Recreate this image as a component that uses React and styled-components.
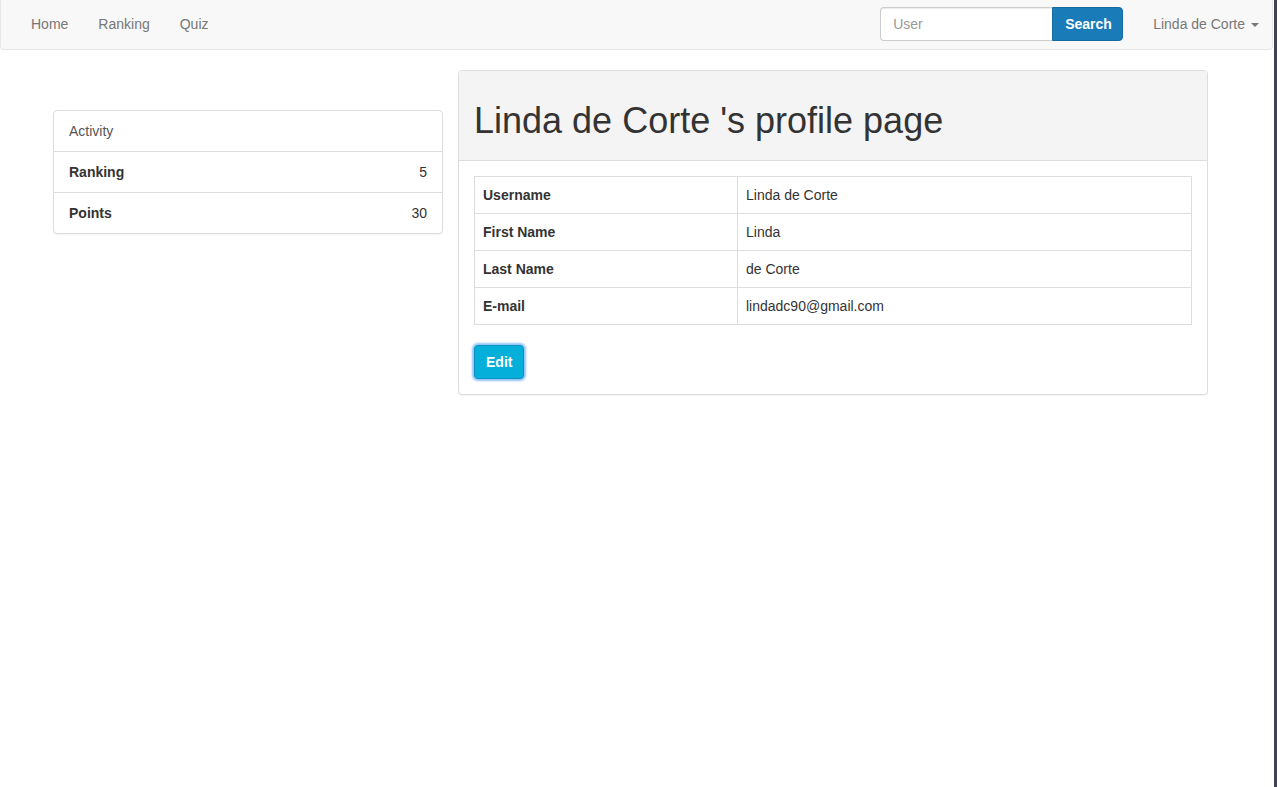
import React from "react";
import styled, { createGlobalStyle } from "styled-components";

const Global = createGlobalStyle`
  html, body { margin: 0; padding: 0; background: #fff; }
  body {
    font-family: "Liberation Sans", Arial, Helvetica, sans-serif;
    font-size: 14px;
    line-height: 20px;
    color: #333;
  }
  * { box-sizing: border-box; }
`;

const Page = styled.div`
  min-height: 100vh;
  border-right: 3px solid #3c4455;
  background: #fff;
`;

const Navbar = styled.nav`
  height: 50px;
  margin-right: 1px;
  background: #f8f8f8;
  border: 1px solid #e7e7e7;
  border-top: none;
  border-radius: 0 0 4px 4px;
  display: flex;
  align-items: flex-start;
  justify-content: space-between;
  padding: 0 0 0 15px;
`;

const NavList = styled.div`
  display: flex;
  align-items: flex-start;
  height: 100%;
`;

const NavLink = styled.a`
  display: flex;
  align-items: center;
  gap: 6px;
  padding: 14px ${(p) => (p.$end ? "13px" : "15px")} 15px 15px;
  line-height: 20px;
  color: #777;
  text-decoration: none;
  font-size: 14px;
`;

const SearchForm = styled.form`
  display: flex;
  align-items: stretch;
  height: 34px;
  margin: 7px 15px 0 0;
`;

const SearchInput = styled.input`
  width: 172px;
  height: 34px;
  padding: 6px 12px;
  font-family: inherit;
  font-size: 14px;
  color: #555;
  background: #fff;
  border: 1px solid #ccc;
  border-right: none;
  border-radius: 4px 0 0 4px;
  box-shadow: inset 0 1px 1px rgba(0, 0, 0, 0.075);
  outline: none;
  &::placeholder { color: #999; }
`;

const SearchButton = styled.button`
  width: 71px;
  height: 34px;
  padding: 6px 12px;
  font-family: inherit;
  font-size: 14px;
  font-weight: bold;
  color: #fff;
  background: #1a7bb9;
  border: 1px solid #166aa1;
  border-radius: 0 4px 4px 0;
`;

const Caret = styled.span`
  display: inline-block;
  width: 0;
  height: 0;
  border-top: 4px solid #777;
  border-left: 4px solid transparent;
  border-right: 4px solid transparent;
  margin-top: 1px;
`;

const Main = styled.main`
  display: flex;
  align-items: flex-start;
  padding: 20px 0 0 53px;
`;

const Panel = styled.section`
  background: #fff;
  border: 1px solid #ddd;
  border-radius: 4px;
  box-shadow: 0 1px 1px rgba(0, 0, 0, 0.05);
  overflow: hidden;
`;

const SidePanel = styled(Panel)`
  width: 390px;
  margin-top: 40px;
`;

const ProfilePanel = styled(Panel)`
  width: 750px;
  margin-left: 15px;
`;

const SideHeading = styled.div`
  padding: 10px 15px;
  color: #555;
  border-bottom: 1px solid #ddd;
`;

const StatRow = styled.div`
  display: flex;
  justify-content: space-between;
  padding: 10px 15px;
  border-top: ${(p) => (p.$first ? "none" : "1px solid #ddd")};
`;

const StatLabel = styled.span`
  font-weight: bold;
`;

const ProfileHeading = styled.div`
  background: #f4f4f4;
  border-bottom: 1px solid #ddd;
  padding: 10px 15px;
`;

const Title = styled.h1`
  margin: 20px 0 10px;
  font-size: 36px;
  font-weight: 500;
  line-height: 39px;
  color: #333;
`;

const PanelBody = styled.div`
  padding: 15px;
`;

const Table = styled.table`
  width: 100%;
  border-collapse: collapse;
  margin-bottom: 20px;
  border: 1px solid #ddd;
`;

const Cell = styled.td`
  padding: 8px;
  line-height: 20px;
  border: 1px solid #ddd;
  font-weight: ${(p) => (p.$head ? "bold" : "normal")};
  width: ${(p) => (p.$head ? "263px" : "auto")};
  color: #333;
`;

const EditButton = styled.button`
  height: 34px;
  padding: 6px 11px;
  font-family: inherit;
  font-size: 14px;
  font-weight: bold;
  color: #fff;
  background: #04afda;
  border: 1px solid #0a93c2;
  border-radius: 4px;
  box-shadow: 0 0 2px 2px rgba(110, 175, 245, 0.75);
`;

const profile = [
  ["Username", "Linda de Corte"],
  ["First Name", "Linda"],
  ["Last Name", "de Corte"],
  ["E-mail", "lindadc90@gmail.com"],
];

export default function App() {
  return (
    <Page>
      <Global />
      <Navbar>
        <NavList>
          <NavLink href="#">Home</NavLink>
          <NavLink href="#">Ranking</NavLink>
          <NavLink href="#">Quiz</NavLink>
        </NavList>
        <NavList>
          <SearchForm onSubmit={(e) => e.preventDefault()}>
            <SearchInput placeholder="User" />
            <SearchButton type="submit">Search</SearchButton>
          </SearchForm>
          <NavLink href="#" $end>
            Linda de Corte <Caret />
          </NavLink>
        </NavList>
      </Navbar>
      <Main>
        <SidePanel>
          <SideHeading>Activity</SideHeading>
          <StatRow $first>
            <StatLabel>Ranking</StatLabel>
            <span>5</span>
          </StatRow>
          <StatRow>
            <StatLabel>Points</StatLabel>
            <span>30</span>
          </StatRow>
        </SidePanel>
        <ProfilePanel>
          <ProfileHeading>
            <Title>Linda de Corte 's profile page</Title>
          </ProfileHeading>
          <PanelBody>
            <Table>
              <tbody>
                {profile.map(([k, v]) => (
                  <tr key={k}>
                    <Cell $head>{k}</Cell>
                    <Cell>{v}</Cell>
                  </tr>
                ))}
              </tbody>
            </Table>
            <EditButton>Edit</EditButton>
          </PanelBody>
        </ProfilePanel>
      </Main>
    </Page>
  );
}
